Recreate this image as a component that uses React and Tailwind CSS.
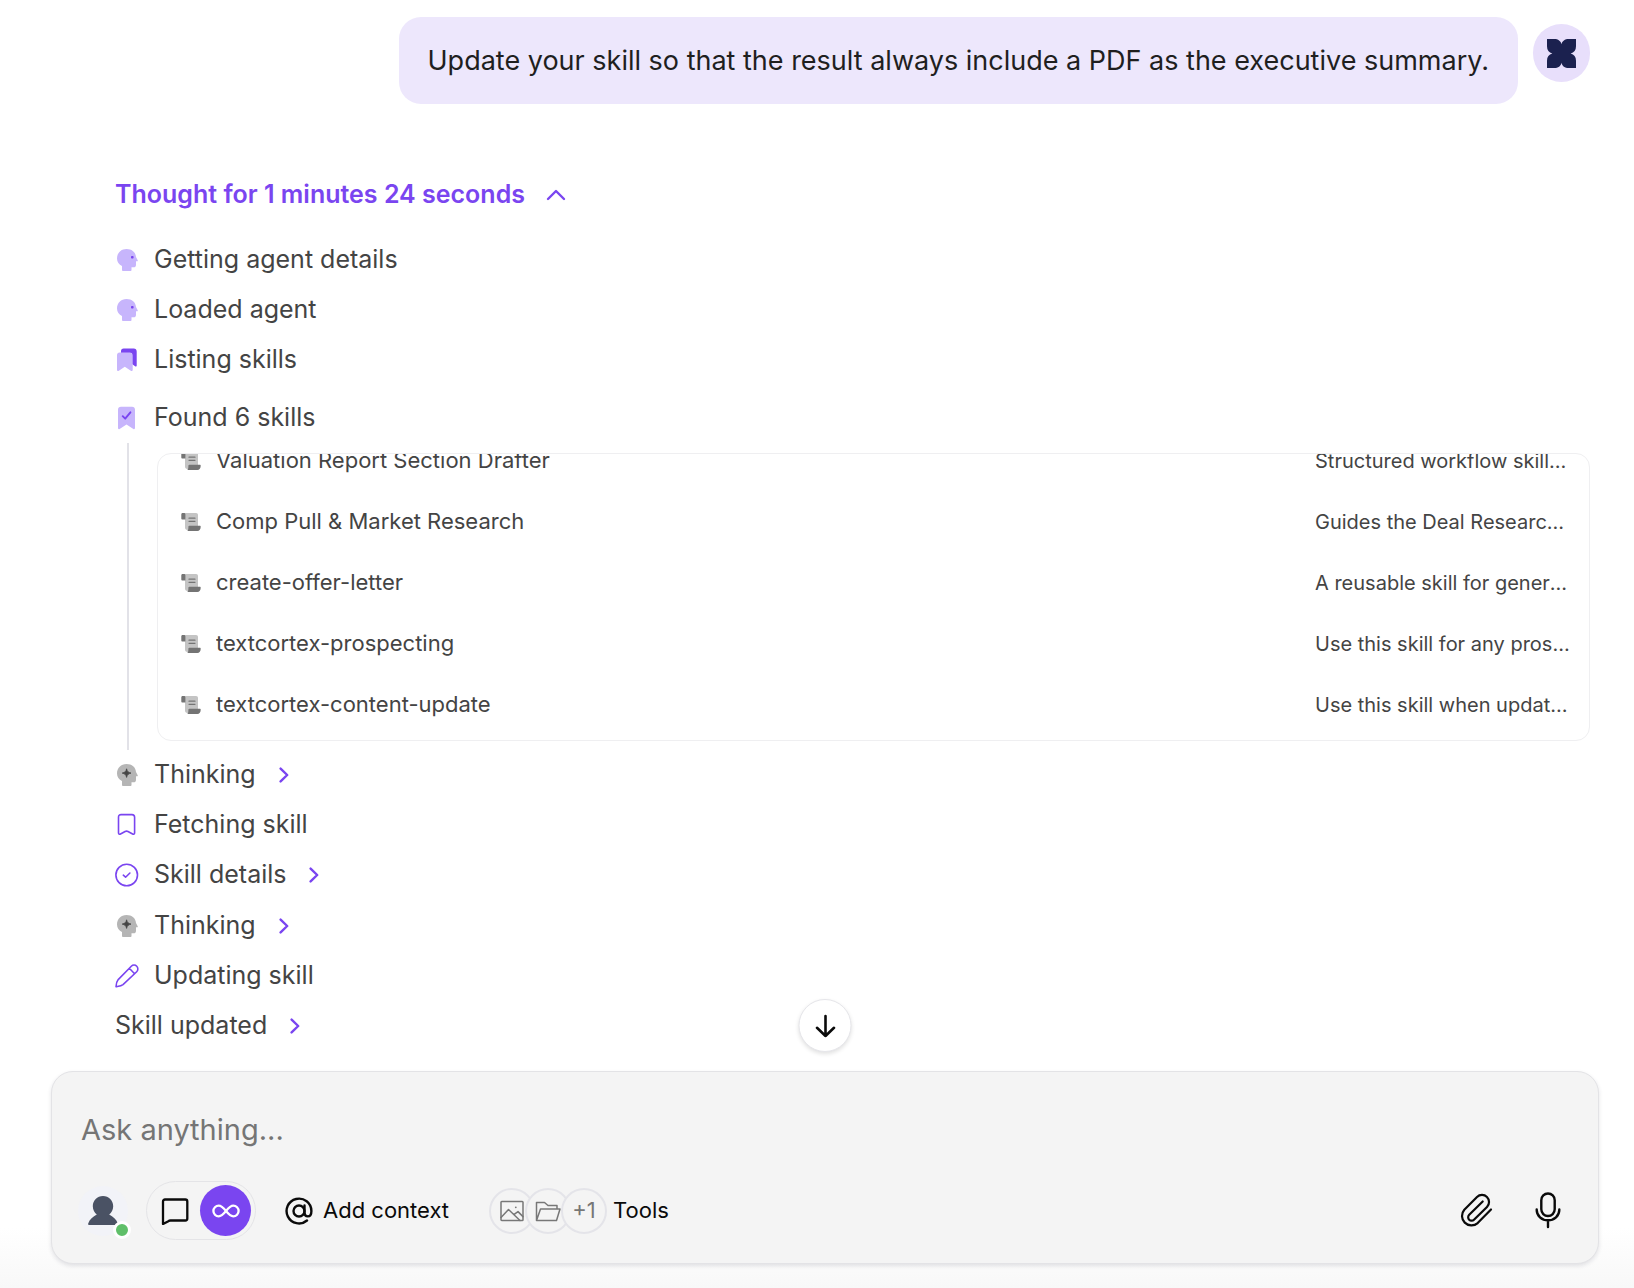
import React from "react";

const SKILLS = [
  ["Valuation Report Section Drafter", "Structured workflow skills for drafting valuation reports"],
  ["Comp Pull & Market Research", "Guides the Deal Research agent through comps"],
  ["create-offer-letter", "A reusable skill for generating offer letters"],
  ["textcortex-prospecting", "Use this skill for any prospecting work"],
  ["textcortex-content-update", "Use this skill when updating content"],
];

const HEAD =
  "M11.5 1C17 1 20.6 4.2 21 9l1.7 3.3c.3.6 0 1-.6 1H21v3.4c0 1.8-1 2.6-2.4 2.6H16.5V22c0 .6-.3 1-.9 1H7.9c-.6 0-.9-.4-.9-1v-4C4 16.6 2 14 2 10.5 2 5 6 1 11.5 1z";

function AgentIcon() {
  return (
    <svg viewBox="0 0 24 24" className="size-6 shrink-0" aria-hidden="true">
      <path d={HEAD} fill="#c7b5fc" />
      <rect x="16" y="7.9" width="2.6" height="2.6" rx="0.9" fill="#7a45f0" />
    </svg>
  );
}

function ThinkingIcon() {
  return (
    <svg viewBox="0 0 24 24" className="size-6 shrink-0" aria-hidden="true">
      <path d={HEAD} fill="#b5b5b5" />
      <path d="M11.6 5.8c.6 2.7 1.5 3.6 4.4 4.3-2.9.7-3.8 1.6-4.4 4.3-.6-2.7-1.5-3.6-4.4-4.3 2.9-.7 3.8-1.6 4.4-4.3z" fill="#444" stroke="#444" strokeWidth="0.8" strokeLinejoin="round" />
    </svg>
  );
}

function BookmarksIcon() {
  return (
    <svg viewBox="0 0 24 24" className="size-6 shrink-0" aria-hidden="true">
      <path d="M6 5V3.2C6 1.7 7 .6 8.6.6h10.2c1.8 0 2.9 1.1 2.9 2.9v14c0 .9-.8 1.3-1.6.8L17 16V5z" fill="#7a45f0" />
      <path d="M4.6 4.4h10.2c1.8 0 2.9 1.1 2.9 2.9v14.8c0 .9-.8 1.3-1.5.8l-6.4-4.2-6.3 4.2c-.7.5-1.5.1-1.5-.8V7.3c0-1.8.9-2.9 2.6-2.9z" fill="#c7b5fc" />
    </svg>
  );
}

function BookmarkCheckIcon() {
  return (
    <svg viewBox="0 0 24 24" className="size-6 shrink-0" aria-hidden="true">
      <path d="M6 .8h11c1.9 0 3 1.1 3 2.9v18.4c0 1-.8 1.4-1.6.9l-6.9-4.4L4.6 23c-.8.5-1.6.1-1.6-.9V3.7C3 1.9 4.1.8 6 .8z" fill="#c7b5fc" />
      <path d="M7.7 10.2l2.5 2.5 5.2-6.4" fill="none" stroke="#7a45f0" strokeWidth="1.9" strokeLinecap="round" strokeLinejoin="round" />
    </svg>
  );
}

function LineIcon({ children }) {
  return (
    <svg viewBox="0 0 24 24" className="size-6 shrink-0" fill="none" stroke="#7a45f0" strokeWidth="1.6" strokeLinecap="round" strokeLinejoin="round" aria-hidden="true">
      {children}
    </svg>
  );
}

function BookmarkIcon() {
  return (
    <LineIcon>
      <path d="M3.5 19.8V4.3c0-1.7.9-2.7 2.6-2.7h10.9c1.7 0 2.6 1 2.6 2.7v15.5c0 1.3-.9 1.8-2 1.2l-4.6-2.5c-1-.5-1.9-.5-2.9 0L5.500 21c-1.100.6-2 .1-2-1.200z" />
    </LineIcon>
  );
}

function CircleCheckIcon() {
  return (
    <LineIcon>
      <circle cx="11.7" cy="12" r="10.8" />
      <path d="M8.3 12.2l2.3 2 4.3-4.2" />
    </LineIcon>
  );
}

function PencilIcon() {
  return (
    <LineIcon>
      <path d="M16.3 2.2a3.8 3.8 0 0 1 5.4 5.5L8 20.6C6 22 3.6 22.2 1 22.7c.2-2.6.6-5.2 2.2-7.1zM14.3 4.3l5.3 5.4" />
    </LineIcon>
  );
}

function ScrollIcon() {
  return (
    <svg viewBox="0 0 20 20" className="size-5 shrink-0" aria-hidden="true">
      <path d="M3 1h12c1.3 0 2 .8 2 2v15H6.5C4.8 18 4 17.2 4 15.6V4z" fill="#c4c4c4" />
      <path d="M1.7 1H3c.9 0 1.4.7 1.4 1.6v4.8H1.2C.6 7.4.3 7 .3 6.5V2.4C.3 1.6.8 1 1.7 1z" fill="#747474" />
      <path d="M8.3 13.7h10.5c.5 0 .9.4.9 1 0 2.3-1.2 4.3-3.4 4.3H6.1c1.2-.7 1.3-2 1.3-4.3 0-.6.3-1 .9-1z" fill="#747474" />
      <path d="M8 6.2h6M8 9.3h6" stroke="#747474" strokeWidth="1.2" strokeLinecap="round" />
    </svg>
  );
}

function ChevronRight() {
  return (
    <svg viewBox="0 0 10 16" className="h-4 w-2.5 shrink-0" fill="none" stroke="#7a45f0" strokeWidth="2.4" strokeLinecap="round" strokeLinejoin="round" aria-hidden="true">
      <path d="M1.6 1.6L8.2 8l-6.6 6.4" />
    </svg>
  );
}

function Step({ icon, label, expandable }) {
  const row = "flex h-[50px] items-center gap-[15px] text-[25px] text-[#444]";
  if (expandable) {
    return (
      <li>
        <button type="button" aria-expanded="false" className={row}>
          {icon}
          <span className="mr-2">{label}</span>
          <ChevronRight />
        </button>
      </li>
    );
  }
  return (
    <li className={row}>
      {icon}
      <span>{label}</span>
    </li>
  );
}

function UserMessage() {
  return (
    <div className="flex items-start justify-end gap-[15px] pr-11 pl-16">
      <p className="rounded-[22px] bg-[#ede7fc] px-[29px] py-[22px] text-[27px] leading-[43px] text-[#1f1f1f]">
        Update your skill so that the result always include a PDF as the executive summary.
      </p>
      <div className="mt-[7px] flex h-[58px] w-[57px] shrink-0 items-center justify-center rounded-full bg-[#e8dffb]">
        <svg viewBox="0 0 30 30" className="size-[29px]" role="img" aria-label="User">
          <path
            fill="#1b214f"
            d="M0 0h7.5c4 0 6.8 2 7.5 5.5C15.7 2 18.5 0 22.5 0H30v7.5c0 4-2 6.7-5.5 7.5 3.5.8 5.5 3.5 5.5 7.5V30h-7.5c-4 0-6.8-2-7.5-5.5C14.3 28 11.5 30 7.5 30H0v-7.5c0-4 2-6.7 5.5-7.5C2 14.2 0 11.5 0 7.5z"
          />
        </svg>
      </div>
    </div>
  );
}

function FoundSkills() {
  return (
    <div className="ml-3 border-l-2 border-[#e2e2e8] pt-2.5 pb-[9px] pl-7">
      <ul className="flex h-[288px] flex-col justify-end overflow-hidden rounded-[14px] border border-[#efeff1] pb-[5px]">
        {SKILLS.map(([name, description]) => (
          <li key={name} className="flex h-[61px] shrink-0 items-center gap-[15px] pr-[17px] pl-[23px] text-[#444]">
            <ScrollIcon />
            <span className="flex-1 truncate text-[22px]">{name}</span>
            <span className="w-[257px] truncate text-[20px]">{description}</span>
          </li>
        ))}
      </ul>
    </div>
  );
}

function Thoughts() {
  return (
    <section className="mt-[66px] flex flex-col pr-11 pl-[115px]">
      <button type="button" aria-expanded="true" className="flex h-[50px] items-center gap-[21px] self-start text-[25px] font-semibold text-[#7a45f0]">
        Thought for 1 minutes 24 seconds
        <svg viewBox="0 0 20 12" className="h-3 w-5" fill="none" stroke="currentColor" strokeWidth="2.4" strokeLinecap="round" strokeLinejoin="round" aria-hidden="true">
          <path d="M2 10l8-8 8 8" />
        </svg>
      </button>
      <ul className="mt-[15px]">
        <Step icon={<AgentIcon />} label="Getting agent details" />
        <Step icon={<AgentIcon />} label="Loaded agent" />
        <Step icon={<BookmarksIcon />} label="Listing skills" />
      </ul>
      <ul className="mt-2">
        <Step icon={<BookmarkCheckIcon />} label="Found 6 skills" />
      </ul>
      <FoundSkills />
      <ul>
        <Step icon={<ThinkingIcon />} label="Thinking" expandable />
        <Step icon={<BookmarkIcon />} label="Fetching skill" />
        <Step icon={<CircleCheckIcon />} label="Skill details" expandable />
      </ul>
      <ul className="mt-px">
        <Step icon={<ThinkingIcon />} label="Thinking" expandable />
        <Step icon={<PencilIcon />} label="Updating skill" />
        <Step label="Skill updated" expandable />
      </ul>
    </section>
  );
}

function Composer() {
  const bubble = "flex size-[46px] items-center justify-center rounded-full border-2 border-[#e4e4e9] bg-[#f4f4f4] text-[22px] text-[#777]";
  return (
    <div className="relative mr-[35px] ml-[51px]">
      <button
        type="button"
        aria-label="Scroll to bottom"
        className="absolute bottom-full left-1/2 mb-[19px] flex size-[53px] -translate-x-1/2 items-center justify-center rounded-full border border-[#e6e6ea] bg-white shadow-[0_2px_4px_rgba(0,0,0,0.12)]"
      >
        <svg viewBox="0 0 22 24" className="h-6 w-[22px]" fill="none" stroke="#0a0a0a" strokeWidth="2.6" strokeLinecap="round" strokeLinejoin="round" aria-hidden="true">
          <path d="M11 2v20M2.5 13.8L11 22l8.5-8.2" />
        </svg>
      </button>
      <form
        onSubmit={(e) => e.preventDefault()}
        className="rounded-[22px] border border-[#e3e3e6] bg-[#f4f4f4] px-[26px] pt-[35px] pb-[23px] shadow-[0_2px_4px_rgba(30,30,60,0.12)]"
      >
        <input
          type="text"
          aria-label="Message"
          placeholder="Ask anything..."
          className="block h-11 w-full bg-transparent px-[3px] text-[29px] text-[#111] outline-none placeholder:text-[#757575]"
        />
        <div className="mt-[30px] flex items-center">
          <button type="button" aria-label="Agent" className="relative flex size-[50px] items-center justify-center rounded-full bg-[#f2f3f8]">
            <svg viewBox="0 0 30 30" className="size-[30px]" fill="#4a5264" aria-hidden="true">
              <path d="M15 0c5.800 0 10.200 4.500 10.200 10.200 0 3.600-1.700 6.300-4 8.300 3.800 2 7.200 4.800 8.600 9 .3.900-.3 1.500-1.100 1.500H1.300c-.8 0-1.400-.6-1.100-1.500 1.400-4.200 4.800-7 8.600-9-2.300-2-4-4.700-4-8.300C4.800 4.500 9.200 0 15 0z" />
            </svg>
            <span className="absolute -right-[3px] -bottom-[3px] size-[18px] rounded-full border-3 border-white bg-[#5fbf69]" />
          </button>
          <div className="ml-[18px] flex h-[59px] items-center rounded-full border border-[#e4e4e7] pr-1 pl-[3px]">
            <button type="button" aria-label="Chat mode" className="flex size-[50px] items-center justify-center">
              <svg viewBox="0 0 28 28" className="size-7" fill="none" stroke="#0a0a0a" strokeWidth="2.3" strokeLinejoin="round" aria-hidden="true">
                <path d="M4 2.5h20.3a2 2 0 0 1 2 2v17a2 2 0 0 1-2 2H9.5c-.8 0-1.5.2-2.1.7L2 27V4.500a2 2 0 0 1 2-2z" />
              </svg>
            </button>
            <button type="button" aria-label="Agent mode" className="flex size-[51px] items-center justify-center rounded-full bg-[#7a45f0]">
              <svg viewBox="0 0 28 14" className="h-3.5 w-7" fill="none" stroke="#fff" strokeWidth="2.3" strokeLinecap="round" aria-hidden="true">
                <path d="M14 7c-2.6-3.2-4.7-5.3-7.3-5.3a5.3 5.3 0 0 0 0 10.6c2.6 0 4.7-2.1 7.3-5.3s4.7-5.3 7.3-5.3a5.3 5.3 0 0 1 0 10.6C18.7 12.3 16.6 10.2 14 7z" />
              </svg>
            </button>
          </div>
          <button type="button" className="ml-[29px] flex items-center gap-2.5 text-[22px] text-[#0a0a0a]">
            <svg viewBox="0 0 28 28" className="size-7" fill="none" stroke="currentColor" strokeWidth="2.4" strokeLinecap="round" strokeLinejoin="round" aria-hidden="true">
              <circle cx="14" cy="14" r="5.5" />
              <path d="M19.5 8.5v7.3c0 2.2 1.3 3.600 3.300 3.600s3.600-1.600 3.600-5.400A12.400 12.400 0 1 0 22 23.500" />
            </svg>
            Add context
          </button>
          <button type="button" className="ml-10 flex items-center gap-[6px] text-[22px] text-[#0a0a0a]">
            <span className="flex -space-x-2.5">
              <span className={bubble}>
                <svg viewBox="0 0 24 22" className="h-[22px] w-6 shrink-0" fill="none" stroke="currentColor" strokeWidth="1.5" strokeLinejoin="round" strokeLinecap="round" aria-hidden="true">
                  <rect x="1" y="1.5" width="22" height="19" rx="0.8" />
                  <path d="M1 17.5l7.5-8L20 20.5M13.8 14.6l4.2-3 5 5" />
                  <circle cx="15.8" cy="7.3" r="0.9" fill="currentColor" stroke="none" />
                </svg>
              </span>
              <span className={bubble}>
                <svg viewBox="0 0 26 22" className="h-[22px] w-[26px] shrink-0" fill="none" stroke="currentColor" strokeWidth="1.5" strokeLinejoin="round" aria-hidden="true">
                  <path d="M1.5 20.5V2.5h8l3.5 3h9v3.5M1.5 20.5L5.5 9H25l-3.5 11.5z" />
                </svg>
              </span>
              <span className={bubble}>+1</span>
            </span>
            Tools
          </button>
          <div className="ml-auto flex items-center gap-10 pr-2.5">
            <button type="button" aria-label="Attach file">
              <svg viewBox="0 0 34 35" className="h-[35px] w-[34px]" fill="none" stroke="#0a0a0a" strokeWidth="2.2" strokeLinecap="round" strokeLinejoin="round" aria-hidden="true">
                <path d="M31 16.5L17.7 30.1A9.5 9.5 0 0 1 4.3 16.7L17 4a7 7 0 0 1 10 9.9L14 26.7a3.4 3.4 0 0 1-4.8-4.9L22.7 8.500" />
              </svg>
            </button>
            <button type="button" aria-label="Voice input">
              <svg viewBox="0 0 28 38" className="h-[38px] w-7" fill="none" stroke="#0a0a0a" strokeWidth="2.4" strokeLinecap="round" strokeLinejoin="round" aria-hidden="true">
                <rect x="7.3" y="1.5" width="13.4" height="22.5" rx="6.7" />
                <path d="M2.700 17.500v.5a11.300 10.300 0 0 0 22.600 0v-.5M14 28.500V35" />
              </svg>
            </button>
          </div>
        </div>
      </form>
    </div>
  );
}

export default function App() {
  return (
    <main className="flex min-h-screen flex-col bg-[linear-gradient(to_top,#f8f8f8,#fff_60px)] pt-[17px] pb-6 font-['Inter',sans-serif]">
      <UserMessage />
      <Thoughts />
      <div className="mt-auto pt-5">
        <Composer />
      </div>
    </main>
  );
}
